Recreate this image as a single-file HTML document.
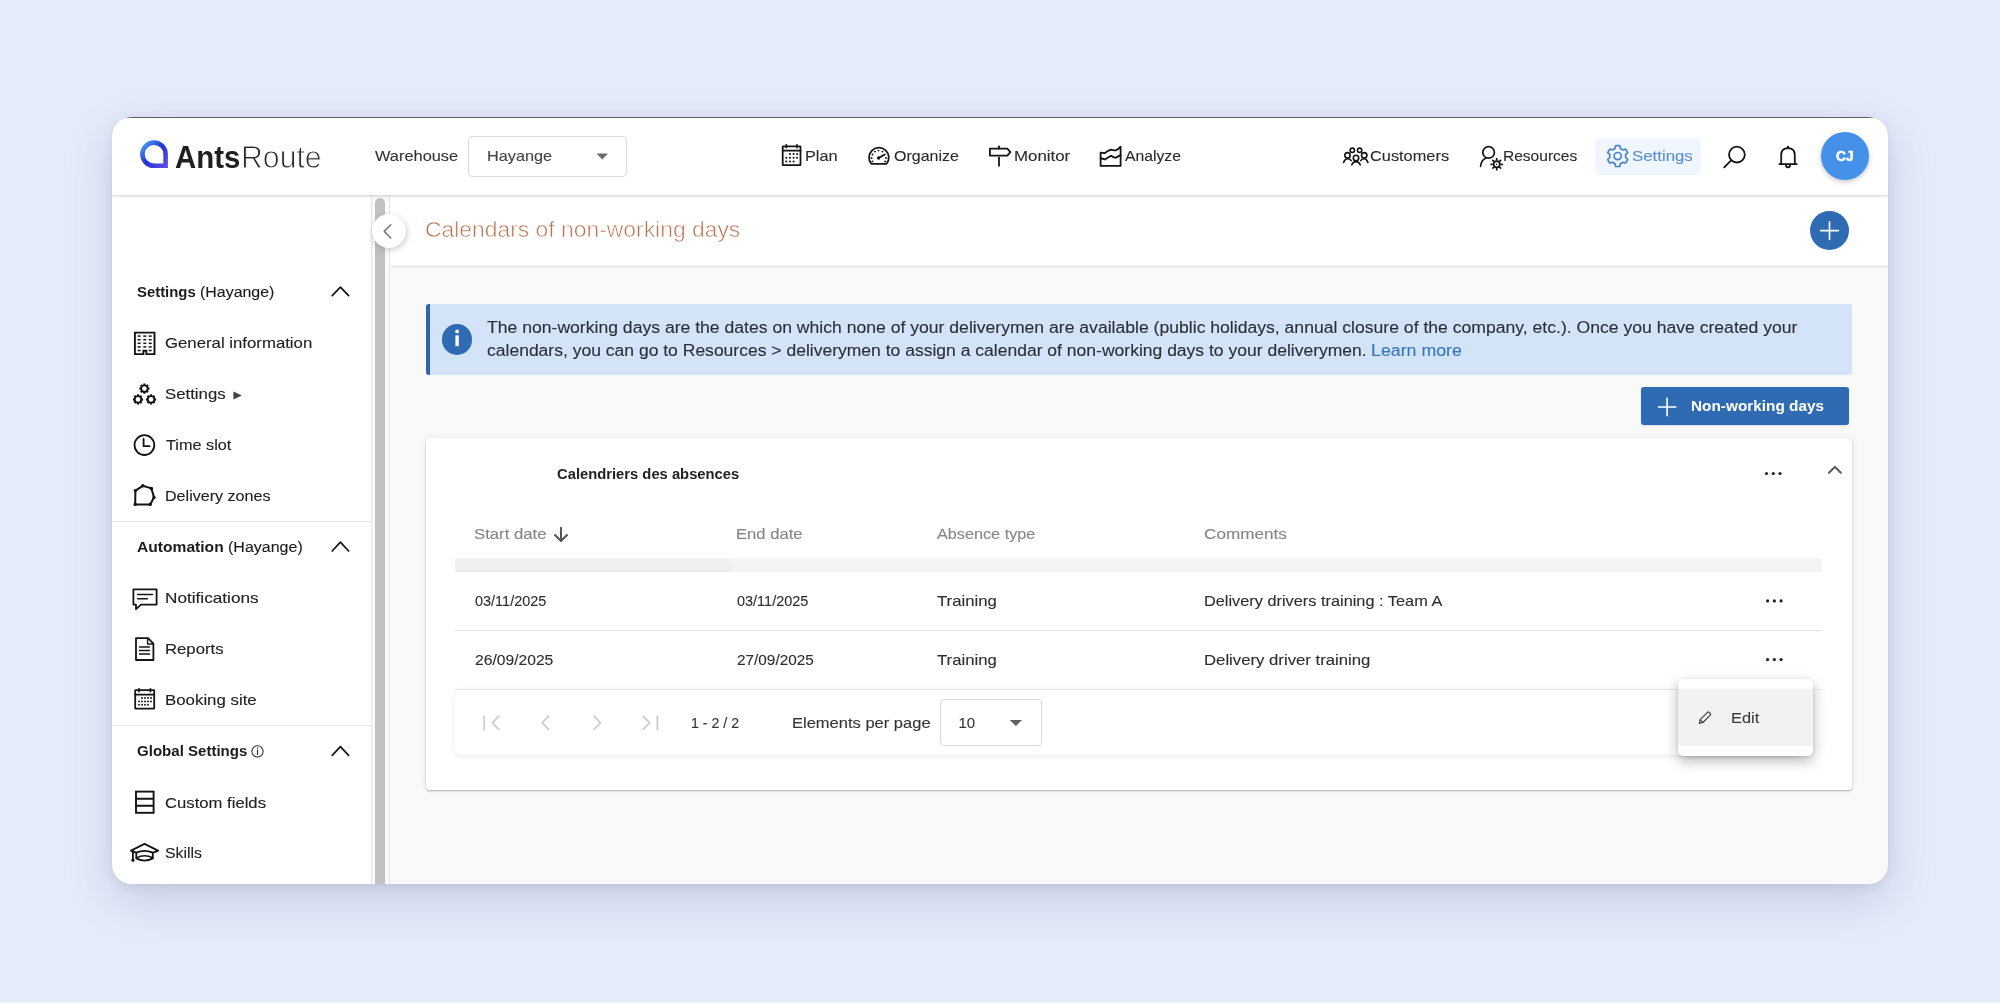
<!DOCTYPE html>
<html><head><meta charset="utf-8"><title>AntsRoute - Calendars of non-working days</title>
<style>
*{margin:0;padding:0;box-sizing:border-box}
html,body{width:2000px;height:1003px;overflow:hidden;background:#e6ebfb;font-family:"Liberation Sans",sans-serif}
.abs{position:absolute}
.t{position:absolute;line-height:0;white-space:pre;transform-origin:0 0}
.win{position:absolute;left:112px;top:117px;width:1776px;height:767px;border-radius:20px;overflow:hidden;background:#fff;
 box-shadow:0 16px 45px rgba(70,80,120,.2),0 2px 10px rgba(70,80,120,.1)}
.pg{position:absolute;left:-112px;top:-117px;width:2000px;height:1003px}
svg{position:absolute;overflow:visible}
.tl{position:absolute;left:0;top:0;width:2000px;height:1003px;will-change:transform}
</style></head>
<body>
<div class="win"><div class="pg">
<!-- top dark edge -->
<div class="abs" style="left:112px;top:117px;width:1776px;height:1px;background:#5d616b"></div>
<!-- main area bg -->
<div class="abs" style="left:390px;top:195px;width:1498px;height:689px;background:#f9f9f9"></div>
<!-- title bar -->
<div class="abs" style="left:390px;top:195px;width:1498px;height:72px;background:#fff;border-bottom:1px solid #e2e2e2"></div>
<!-- sidebar borders / scrollbar -->
<div class="abs" style="left:371px;top:195px;width:1px;height:689px;background:#e4e4e4"></div>
<div class="abs" style="left:372px;top:195px;width:17px;height:689px;background:#fafafa"></div>
<div class="abs" style="left:389px;top:195px;width:1px;height:689px;background:#e6e6e6"></div>
<div class="abs" style="left:375px;top:198px;width:10px;height:700px;background:#c1c1c1;border-radius:5px"></div>
<div class="abs" style="left:112px;top:521px;width:259px;height:1px;background:#e3e3e3"></div>
<div class="abs" style="left:112px;top:725px;width:259px;height:1px;background:#e3e3e3"></div>
<!-- header -->
<div class="abs" style="left:112px;top:118px;width:1776px;height:77px;background:#fff;box-shadow:0 1px 3px rgba(0,0,0,.2)"></div>
<div class="abs" style="left:468px;top:136px;width:158.5px;height:40.5px;border:1px solid #dcdcdc;border-radius:4px;background:#fff"></div>
<div class="abs" style="left:1595px;top:137.5px;width:105.6px;height:37.5px;background:#f0f6fd;border-radius:5px"></div>
<div class="abs" style="left:1821px;top:131.6px;width:48px;height:48px;border-radius:50%;background:#4590e9;box-shadow:0 2px 5px rgba(0,0,0,.22)"></div>
<!-- collapse button -->
<div class="abs" style="left:372px;top:214px;width:34px;height:34px;border-radius:50%;background:#fff;box-shadow:1px 2px 6px rgba(0,0,0,.2)"></div>
<!-- plus circle -->
<div class="abs" style="left:1810px;top:211px;width:39px;height:39px;border-radius:50%;background:#2f6bb2"></div>
<!-- banner -->
<div class="abs" style="left:426px;top:304px;width:1425.5px;height:70.5px;background:#d3e4f8;border-left:4px solid #2e66ad;border-radius:3px"></div>
<div class="abs" style="left:441.8px;top:324.2px;width:30.4px;height:30.4px;border-radius:50%;background:#2f6bb2"></div>
<!-- button -->
<div class="abs" style="left:1641px;top:387px;width:208px;height:38px;background:#2f6bb2;border-radius:3px;box-shadow:0 1px 2px rgba(0,0,0,.12)"></div>
<!-- card -->
<div class="abs" style="left:426px;top:437.5px;width:1426px;height:352.5px;background:#fff;border-radius:4px;box-shadow:0 1px 2px rgba(0,0,0,.28),0 0 8px rgba(0,0,0,.06)"></div>
<div class="abs" style="left:455px;top:558px;width:1367px;height:14px;background:linear-gradient(#f6f6f8,#f2f2f4)"></div>
<div class="abs" style="left:455px;top:558px;width:277px;height:14px;background:linear-gradient(#f3f3f5,#eeeef0)"></div>
<div class="abs" style="left:455px;top:630px;width:1367px;height:1px;background:#e3e3e3"></div>
<div class="abs" style="left:455px;top:689px;width:1367px;height:1px;background:#ececec"></div>
<div class="abs" style="left:455px;top:690px;width:1345px;height:64.5px;background:#fff;border-radius:4px;box-shadow:0 1px 6px rgba(0,0,0,.09)"></div>
<div class="abs" style="left:940.3px;top:699.4px;width:101.5px;height:46.8px;border:1px solid #d9d9d9;border-radius:4px;background:#fff"></div>
<!-- edit dropdown -->
<div class="abs" style="left:1678.2px;top:679px;width:134.6px;height:77.4px;background:#fff;border-radius:5px;box-shadow:0 5px 14px rgba(0,0,0,.28),0 1px 3px rgba(0,0,0,.12)"></div>
<div class="abs" style="left:1678.2px;top:689.3px;width:134.6px;height:56.7px;background:#f2f2f2"></div>


<svg style="left:0;top:0" width="2000" height="1003" viewBox="0 0 2000 1003" fill="none" stroke-linecap="round" stroke-linejoin="round">
<defs>
<linearGradient id="lg" x1="0" y1="0" x2="1" y2="1">
<stop offset="0" stop-color="#4fa3f2"/><stop offset=".5" stop-color="#2235d0"/><stop offset="1" stop-color="#5d4ae8"/>
</linearGradient>
</defs>
<path d="M165.6,165.8 L154.2,165.8 A11.6,11.6 0 1 1 165.6,154.2 Z" stroke="url(#lg)" stroke-width="4.6" stroke-linejoin="miter" stroke-linecap="butt"/>
<path d="M596.5,153.5 L608,153.5 L602.25,159.5 Z" fill="#6a6a6a" stroke="none"/>
<g stroke="#141414" stroke-width="1.8">
<rect x="782.7" y="146.4" width="17.8" height="18.8" rx="0.4"/>
<line x1="782.7" y1="150.6" x2="800.5" y2="150.6"/>
<line x1="786.3" y1="144.9" x2="786.3" y2="147.6"/><line x1="797" y1="144.9" x2="797" y2="147.6"/>
</g>
<g fill="#141414"><circle cx="790" cy="154" r="1.05"/><circle cx="793.6" cy="154" r="1.05"/><circle cx="797.1" cy="154" r="1.05"/><circle cx="786.3" cy="157.8" r="1.05"/><circle cx="790" cy="157.8" r="1.05"/><circle cx="793.6" cy="157.8" r="1.05"/><circle cx="797.1" cy="157.8" r="1.05"/><circle cx="786.3" cy="161.5" r="1.05"/><circle cx="790" cy="161.5" r="1.05"/><circle cx="793.6" cy="161.5" r="1.05"/></g>
<g stroke="#141414" stroke-width="1.8">
<path d="M871.2,163.8 A9.9,9.9 0 1 1 886.6,163.8 Z"/>
<line x1="878.6" y1="158" x2="884.8" y2="154.4" stroke-width="1.7"/>
</g>
<g fill="#141414"><circle cx="875" cy="151.6" r="0.95"/><circle cx="878.4" cy="150.6" r="0.95"/><circle cx="882.5" cy="151.6" r="0.95"/><circle cx="872.5" cy="154.5" r="0.95"/><circle cx="871.6" cy="158" r="0.95"/><circle cx="872.5" cy="161.4" r="0.95"/><circle cx="886" cy="158" r="0.95"/><circle cx="885" cy="161.4" r="0.95"/><circle cx="878.6" cy="158" r="1.7"/></g>
<g stroke="#141414" stroke-width="1.8">
<path d="M989.9,148.6 L1007.3,148.6 L1010.4,152.1 L1007.3,155.6 L989.9,155.6 Z"/>
<line x1="999" y1="146.3" x2="999" y2="148.6"/><line x1="999" y1="157.6" x2="999" y2="165.8"/>
</g>
<g stroke="#141414" stroke-width="1.8">
<path d="M1100.6,152.6 L1100.6,165.9 L1120.6,165.9 L1120.6,146.7 Q1118,149.8 1115.8,150.4 Q1113,150.6 1110.8,149.7 Q1106.8,151.2 1104.9,153.2 Q1102.8,152.6 1100.6,152.6 Z"/>
<path d="M1100.6,158.5 Q1102.8,158.4 1104.9,159.5 Q1108,157.6 1111.1,155.8 Q1113.5,157.6 1115.8,157.8 Q1118,156.4 1120.6,155.1"/>
</g>
<g stroke="#141414" stroke-width="1.6">
<circle cx="1352.3" cy="150.3" r="2.2"/><circle cx="1359.6" cy="150.3" r="2.2"/>
<circle cx="1347.5" cy="155.3" r="2.7"/><circle cx="1364.2" cy="155.3" r="2.7"/><circle cx="1356" cy="158" r="2.7"/>
<path d="M1343.6,162.4 Q1345,158.8 1347.5,158.8 Q1350,158.8 1351.2,160.6"/>
<path d="M1367.9,162.4 Q1366.5,158.8 1364.2,158.8 Q1361.8,158.8 1360.8,160.6"/>
<path d="M1351.8,164.8 Q1353,161.6 1356,161.6 Q1359,161.6 1360.2,164.8"/>
</g>
<g stroke="#141414" stroke-width="1.7">
<circle cx="1488.6" cy="152.4" r="5.8"/>
<path d="M1480.6,166.4 Q1481.3,159.6 1485.8,158.2"/>
</g>
<circle cx="1496.7" cy="164.3" r="3.1" stroke="#141414" stroke-width="1.7"/><circle cx="1496.7" cy="164.3" r="0.8" fill="#141414"/>
<g stroke="#141414" stroke-width="1.7" stroke-linecap="butt"><line x1="1496.70" y1="160.50" x2="1496.70" y2="158.10"/><line x1="1499.39" y1="161.61" x2="1501.08" y2="159.92"/><line x1="1500.50" y1="164.30" x2="1502.90" y2="164.30"/><line x1="1499.39" y1="166.99" x2="1501.08" y2="168.68"/><line x1="1496.70" y1="168.10" x2="1496.70" y2="170.50"/><line x1="1494.01" y1="166.99" x2="1492.32" y2="168.68"/><line x1="1492.90" y1="164.30" x2="1490.50" y2="164.30"/><line x1="1494.01" y1="161.61" x2="1492.32" y2="159.92"/></g>
<path d="M1614.96,148.58 L1615.68,145.69 L1619.72,145.69 L1620.44,148.58 A8.0,8.0 0 0 1 1622.84,149.97 L1625.70,149.15 L1627.72,152.65 L1625.58,154.71 A8.0,8.0 0 0 1 1625.58,157.49 L1627.72,159.55 L1625.70,163.05 L1622.84,162.23 A8.0,8.0 0 0 1 1620.44,163.62 L1619.72,166.51 L1615.68,166.51 L1614.96,163.62 A8.0,8.0 0 0 1 1612.56,162.23 L1609.70,163.05 L1607.68,159.55 L1609.82,157.49 A8.0,8.0 0 0 1 1609.82,154.71 L1607.68,152.65 L1609.70,149.15 L1612.56,149.97 A8.0,8.0 0 0 1 1614.96,148.58 Z" stroke="#4d84c6" stroke-width="1.7"/>
<circle cx="1617.7" cy="156.1" r="3.6" stroke="#4d84c6" stroke-width="1.7"/>
<g stroke="#141414" stroke-width="1.8">
<circle cx="1736.9" cy="154.6" r="7.9"/>
<line x1="1731.2" y1="160.3" x2="1724.2" y2="167.4"/>
<path d="M1781.2,164.2 L1781.2,155.2 Q1781.2,148.2 1788,148.2 Q1794.8,148.2 1794.8,155.2 L1794.8,164.2"/>
<line x1="1779.4" y1="164.2" x2="1796.7" y2="164.2"/>
<path d="M1786,165.3 A2,2 0 0 0 1790,165.3"/>
</g>
<circle cx="1788" cy="147" r="1.2" fill="#141414"/>
<path d="M390.8,224.8 L384.2,231.4 L390.8,238" stroke="#777" stroke-width="1.5"/>
<g stroke="#fff" stroke-width="1.6">
<line x1="1820.6" y1="230.6" x2="1838.4" y2="230.6"/><line x1="1829.5" y1="221.7" x2="1829.5" y2="239.5"/>
<line x1="1658.4" y1="407" x2="1675.8" y2="407"/><line x1="1667.1" y1="398.3" x2="1667.1" y2="415.7"/>
</g>
<rect x="455.4" y="335.4" width="3.4" height="10.8" fill="#fff" stroke="none"/><circle cx="457.1" cy="331.4" r="1.9" fill="#fff" stroke="none"/>
<g stroke="#141414" stroke-width="1.7">
<path d="M332.2,295.6 L340.4,287.2 L348.6,295.6"/>
<path d="M332.2,551 L340.4,542.2 L348.6,551"/>
<path d="M332.2,755.4 L340.4,746.6 L348.6,755.4"/>
</g>
<path d="M233.4,391.4 L233.4,399.6 L241.8,395.5 Z" fill="#444" stroke="none"/>
<g stroke="#141414" stroke-width="1.9" stroke-linecap="butt" stroke-linejoin="miter">
<path d="M143.4,354.1 L134.9,354.1 L134.9,332.6 L154.5,332.6 L154.5,354.1 L146.4,354.1 L146.4,350.8 L143.4,350.8 Z"/>
</g>
<g fill="#141414"><rect x="137.6" y="335.35" width="3" height="1.5"/><rect x="143.3" y="335.35" width="3" height="1.5"/><rect x="148.7" y="335.35" width="3" height="1.5"/><rect x="137.6" y="338.95" width="3" height="1.5"/><rect x="143.3" y="338.95" width="3" height="1.5"/><rect x="148.7" y="338.95" width="3" height="1.5"/><rect x="137.6" y="342.55" width="3" height="1.5"/><rect x="143.3" y="342.55" width="3" height="1.5"/><rect x="148.7" y="342.55" width="3" height="1.5"/><rect x="137.6" y="346.15" width="3" height="1.5"/><rect x="143.3" y="346.15" width="3" height="1.5"/><rect x="148.7" y="346.15" width="3" height="1.5"/><rect x="137.6" y="349.75" width="3" height="1.5"/><rect x="148.7" y="349.75" width="3" height="1.5"/></g>
<path d="M143.13,384.70 L143.41,383.50 L145.39,383.50 L145.67,384.70 A4.1,4.1 0 0 1 146.26,384.95 L147.31,384.29 L148.71,385.69 L148.05,386.74 A4.1,4.1 0 0 1 148.30,387.33 L149.50,387.61 L149.50,389.59 L148.30,389.87 A4.1,4.1 0 0 1 148.05,390.46 L148.71,391.51 L147.31,392.91 L146.26,392.25 A4.1,4.1 0 0 1 145.67,392.50 L145.39,393.70 L143.41,393.70 L143.13,392.50 A4.1,4.1 0 0 1 142.54,392.25 L141.49,392.91 L140.09,391.51 L140.75,390.46 A4.1,4.1 0 0 1 140.50,389.87 L139.30,389.59 L139.30,387.61 L140.50,387.33 A4.1,4.1 0 0 1 140.75,386.74 L140.09,385.69 L141.49,384.29 L142.54,384.95 A4.1,4.1 0 0 1 143.13,384.70 Z" fill="#141414" stroke="none"/>
<circle cx="144.4" cy="388.6" r="2.3" fill="#fff" stroke="none"/>
<path d="M136.73,395.50 L137.01,394.30 L138.99,394.30 L139.27,395.50 A4.1,4.1 0 0 1 139.86,395.75 L140.91,395.09 L142.31,396.49 L141.65,397.54 A4.1,4.1 0 0 1 141.90,398.13 L143.10,398.41 L143.10,400.39 L141.90,400.67 A4.1,4.1 0 0 1 141.65,401.26 L142.31,402.31 L140.91,403.71 L139.86,403.05 A4.1,4.1 0 0 1 139.27,403.30 L138.99,404.50 L137.01,404.50 L136.73,403.30 A4.1,4.1 0 0 1 136.14,403.05 L135.09,403.71 L133.69,402.31 L134.35,401.26 A4.1,4.1 0 0 1 134.10,400.67 L132.90,400.39 L132.90,398.41 L134.10,398.13 A4.1,4.1 0 0 1 134.35,397.54 L133.69,396.49 L135.09,395.09 L136.14,395.75 A4.1,4.1 0 0 1 136.73,395.50 Z" fill="#141414" stroke="none"/>
<circle cx="138" cy="399.4" r="2.3" fill="#fff" stroke="none"/>
<path d="M149.73,395.50 L150.01,394.30 L151.99,394.30 L152.27,395.50 A4.1,4.1 0 0 1 152.86,395.75 L153.91,395.09 L155.31,396.49 L154.65,397.54 A4.1,4.1 0 0 1 154.90,398.13 L156.10,398.41 L156.10,400.39 L154.90,400.67 A4.1,4.1 0 0 1 154.65,401.26 L155.31,402.31 L153.91,403.71 L152.86,403.05 A4.1,4.1 0 0 1 152.27,403.30 L151.99,404.50 L150.01,404.50 L149.73,403.30 A4.1,4.1 0 0 1 149.14,403.05 L148.09,403.71 L146.69,402.31 L147.35,401.26 A4.1,4.1 0 0 1 147.10,400.67 L145.90,400.39 L145.90,398.41 L147.10,398.13 A4.1,4.1 0 0 1 147.35,397.54 L146.69,396.49 L148.09,395.09 L149.14,395.75 A4.1,4.1 0 0 1 149.73,395.50 Z" fill="#141414" stroke="none"/>
<circle cx="151" cy="399.4" r="2.3" fill="#fff" stroke="none"/>
<g stroke="#141414" stroke-width="1.8">
<circle cx="144.4" cy="445.1" r="9.9"/>
<path d="M143.6,439 L143.6,446.2 L149.6,446.2"/>
<path d="M135.2,504.4 L135.4,490.6 L142.8,485.8 L151.4,488.4 L154,497.4 L150.2,504.4 Z" stroke-width="2"/>
</g>
<g fill="#141414"><circle cx="135.2" cy="504.4" r="1.7"/><circle cx="135.4" cy="490.6" r="1.7"/><circle cx="142.8" cy="485.8" r="1.7"/><circle cx="151.4" cy="488.4" r="1.7"/><circle cx="154" cy="497.4" r="1.7"/><circle cx="150.2" cy="504.4" r="1.7"/></g>
<g stroke="#141414" stroke-width="1.8">
<path d="M133.4,589.4 L156.6,589.4 L156.6,604.6 L141,604.6 L136,609.2 L136,604.6 L133.4,604.6 Z"/>
<line x1="137.6" y1="594.6" x2="152.4" y2="594.6" stroke-width="1.5"/>
<line x1="137.6" y1="598.8" x2="147.4" y2="598.8" stroke-width="1.5"/>
<path d="M136,638.2 L148,638.2 L153.4,643.6 L153.4,660 L136,660 Z"/>
<path d="M147.6,638.2 L147.6,644 L153.4,644" stroke-width="1.4"/>
</g>
<g stroke="#141414" stroke-width="1.4">
<line x1="139.5" y1="647" x2="149.5" y2="647"/><line x1="139.5" y1="650.5" x2="149.5" y2="650.5"/><line x1="139.5" y1="654" x2="149.5" y2="654"/>
</g>
<g stroke="#141414" stroke-width="1.8">
<rect x="135.2" y="690.2" width="19" height="18.4" rx="0.4"/>
<line x1="135.2" y1="694.6" x2="154.2" y2="694.6"/>
<line x1="139" y1="688.8" x2="139" y2="691.6"/><line x1="150.4" y1="688.8" x2="150.4" y2="691.6"/>
</g>
<g fill="#141414"><circle cx="142" cy="698" r="0.95"/><circle cx="145" cy="698" r="0.95"/><circle cx="148" cy="698" r="0.95"/><circle cx="151" cy="698" r="0.95"/><circle cx="139" cy="701.4" r="0.95"/><circle cx="142" cy="701.4" r="0.95"/><circle cx="145" cy="701.4" r="0.95"/><circle cx="148" cy="701.4" r="0.95"/><circle cx="151" cy="701.4" r="0.95"/><circle cx="139" cy="704.8" r="0.95"/><circle cx="142" cy="704.8" r="0.95"/><circle cx="145" cy="704.8" r="0.95"/><circle cx="148" cy="704.8" r="0.95"/></g>
<circle cx="257.5" cy="751.4" r="5.6" stroke="#333" stroke-width="1.1"/><line x1="257.5" y1="750.2" x2="257.5" y2="754.4" stroke="#333" stroke-width="1.2"/><circle cx="257.5" cy="748.3" r="0.7" fill="#333"/>
<g stroke="#141414" stroke-width="1.9" stroke-linejoin="miter" stroke-linecap="butt">
<rect x="136" y="791.6" width="17.6" height="21.2"/>
<line x1="136" y1="798.8" x2="153.6" y2="798.8"/><line x1="136" y1="805.8" x2="153.6" y2="805.8"/>
</g>
<g stroke="#141414" stroke-width="1.8">
<path d="M131,850.6 L144.5,843.9 L158.1,850.6 Q155,852.2 152.8,852.6 Q144.5,849 136.3,852.6 Q133.5,851.8 131,850.6 Z"/>
<path d="M136.3,852.6 L136.3,858.4 Q144.5,862.8 152.8,858.4 L152.8,852.6"/>
<path d="M136.3,857.8 Q144.5,853.8 152.8,857.8" stroke-width="1.5"/>
<line x1="132.9" y1="851" x2="132.9" y2="859.6"/>
</g>
<circle cx="132.9" cy="860.2" r="1.6" fill="#141414"/>
<g stroke="#555" stroke-width="2"><line x1="561" y1="527.8" x2="561" y2="540.8"/><path d="M555,535 L561,541 L567,535"/></g>
<g fill="#222"><circle cx="1766.5" cy="473.5" r="1.6"/><circle cx="1773.25" cy="473.5" r="1.6"/><circle cx="1780" cy="473.5" r="1.6"/><circle cx="1767.6" cy="600.9" r="1.6"/><circle cx="1774.35" cy="600.9" r="1.6"/><circle cx="1781.1" cy="600.9" r="1.6"/><circle cx="1767.6" cy="659.6" r="1.6"/><circle cx="1774.35" cy="659.6" r="1.6"/><circle cx="1781.1" cy="659.6" r="1.6"/></g>
<path d="M1829,472.8 L1834.9,466.9 L1840.8,472.8" stroke="#555" stroke-width="2"/>
<g stroke="#cdcdcd" stroke-width="1.8">
<line x1="484.2" y1="716.2" x2="484.2" y2="729.4"/><path d="M498.8,716.2 L492.4,722.8 L498.8,729.4"/>
<path d="M548.6,716.2 L542.2,722.8 L548.6,729.4"/>
<path d="M594,716.2 L600.4,722.8 L594,729.4"/>
<path d="M643.2,716.2 L649.6,722.8 L643.2,729.4"/><line x1="657.4" y1="716.2" x2="657.4" y2="729.4"/>
</g>
<path d="M1009.8,720 L1022,720 L1015.9,726 Z" fill="#606060" stroke="none"/>
<path d="M1699.3,723.4 L1700.1,719.7 L1707.5,712.3 Q1708.3,711.5 1709.1,712.3 L1710.3,713.5 Q1711.1,714.3 1710.3,715.1 L1702.9,722.5 Z M1700.3,719.9 L1703,722.4" stroke="#3a3a3a" stroke-width="1.1"/>
</svg>
<div class="tl">
<div class="t" style="left:174.55px;top:157.75px;font-size:31px;font-weight:700;color:#1f1f24;transform:scaleX(0.9478)">Ants</div>
<div class="t" style="left:241.05px;top:157.75px;font-size:31px;font-weight:400;color:#2a2a2e;transform:scaleX(0.9750);-webkit-text-stroke:0.9px #fff">Route</div>
<div class="t" style="left:374.50px;top:156.10px;font-size:15px;font-weight:400;color:#333;transform:scaleX(1.0921);-webkit-text-stroke:0.12px #333">Warehouse</div>
<div class="t" style="left:486.52px;top:156.10px;font-size:15px;font-weight:400;color:#444;transform:scaleX(1.0847);-webkit-text-stroke:0.12px #444">Hayange</div>
<div class="t" style="left:805.41px;top:155.60px;font-size:15px;font-weight:400;color:#2b2b2b;transform:scaleX(1.0862);-webkit-text-stroke:0.12px #2b2b2b">Plan</div>
<div class="t" style="left:893.50px;top:155.60px;font-size:15px;font-weight:400;color:#2b2b2b;transform:scaleX(1.0656);-webkit-text-stroke:0.12px #2b2b2b">Organize</div>
<div class="t" style="left:1013.78px;top:155.60px;font-size:15px;font-weight:400;color:#2b2b2b;transform:scaleX(1.1224);-webkit-text-stroke:0.12px #2b2b2b">Monitor</div>
<div class="t" style="left:1125.40px;top:155.60px;font-size:15px;font-weight:400;color:#2b2b2b;transform:scaleX(1.0491);-webkit-text-stroke:0.12px #2b2b2b">Analyze</div>
<div class="t" style="left:1369.91px;top:156.00px;font-size:15px;font-weight:400;color:#2b2b2b;transform:scaleX(1.0901);-webkit-text-stroke:0.12px #2b2b2b">Customers</div>
<div class="t" style="left:1502.96px;top:156.00px;font-size:15px;font-weight:400;color:#2b2b2b;transform:scaleX(1.0352);-webkit-text-stroke:0.12px #2b2b2b">Resources</div>
<div class="t" style="left:1631.78px;top:155.60px;font-size:15px;font-weight:400;color:#5a8fd3;transform:scaleX(1.1208);-webkit-text-stroke:0.12px #5a8fd3">Settings</div>
<div class="t" style="left:1835.80px;top:156.15px;font-size:14px;font-weight:700;color:#fff;transform:scaleX(0.9824);-webkit-text-stroke:0.5px #fff">CJ</div>
<div class="t" style="left:425.38px;top:229.73px;font-size:22.4px;font-weight:400;color:#bb7352;transform:scaleX(1.0215);-webkit-text-stroke:0.55px #fff">Calendars of non-working days</div>
<div class="t" style="left:136.80px;top:292.23px;font-size:15.2px;font-weight:700;color:#1c1c1c;transform:scaleX(0.9800)">Settings</div>
<div class="t" style="left:199.95px;top:292.23px;font-size:15.2px;font-weight:400;color:#1c1c1c;transform:scaleX(1.0493);-webkit-text-stroke:0.12px #1c1c1c">(Hayange)</div>
<div class="t" style="left:165.08px;top:342.80px;font-size:15px;font-weight:400;color:#222;transform:scaleX(1.1177);-webkit-text-stroke:0.12px #222">General information</div>
<div class="t" style="left:165.08px;top:393.80px;font-size:15px;font-weight:400;color:#222;transform:scaleX(1.1189);-webkit-text-stroke:0.12px #222">Settings</div>
<div class="t" style="left:166.20px;top:444.80px;font-size:15px;font-weight:400;color:#222;transform:scaleX(1.0833);-webkit-text-stroke:0.12px #222">Time slot</div>
<div class="t" style="left:165.13px;top:495.60px;font-size:15px;font-weight:400;color:#222;transform:scaleX(1.0722);-webkit-text-stroke:0.12px #222">Delivery zones</div>
<div class="t" style="left:136.70px;top:546.93px;font-size:15.2px;font-weight:700;color:#1c1c1c;transform:scaleX(1.0274)">Automation</div>
<div class="t" style="left:227.75px;top:546.93px;font-size:15.2px;font-weight:400;color:#1c1c1c;transform:scaleX(1.0536);-webkit-text-stroke:0.12px #1c1c1c">(Hayange)</div>
<div class="t" style="left:165.05px;top:598.10px;font-size:15px;font-weight:400;color:#222;transform:scaleX(1.1457);-webkit-text-stroke:0.12px #222">Notifications</div>
<div class="t" style="left:165.09px;top:649.30px;font-size:15px;font-weight:400;color:#222;transform:scaleX(1.1137);-webkit-text-stroke:0.12px #222">Reports</div>
<div class="t" style="left:165.08px;top:699.60px;font-size:15px;font-weight:400;color:#222;transform:scaleX(1.1225);-webkit-text-stroke:0.12px #222">Booking site</div>
<div class="t" style="left:136.70px;top:751.43px;font-size:15.2px;font-weight:700;color:#1c1c1c;transform:scaleX(0.9910)">Global Settings</div>
<div class="t" style="left:165.09px;top:802.70px;font-size:15px;font-weight:400;color:#222;transform:scaleX(1.1111);-webkit-text-stroke:0.12px #222">Custom fields</div>
<div class="t" style="left:165.14px;top:853.10px;font-size:15px;font-weight:400;color:#222;transform:scaleX(1.0588);-webkit-text-stroke:0.12px #222">Skills</div>
<div class="t" style="left:487.00px;top:328.45px;font-size:16px;font-weight:400;color:#2c2f36;transform:scaleX(1.0990);-webkit-text-stroke:0.12px #2c2f36">The non-working days are the dates on which none of your deliverymen are available (public holidays, annual closure of the company, etc.). Once you have created your</div>
<div class="t" style="left:487.00px;top:351.05px;font-size:16px;font-weight:400;color:#2c2f36;transform:scaleX(1.0948);-webkit-text-stroke:0.12px #2c2f36">calendars, you can go to Resources &gt; deliverymen to assign a calendar of non-working days to your deliverymen.</div>
<div class="t" style="left:1370.89px;top:351.05px;font-size:16px;font-weight:400;color:#3a74ba;transform:scaleX(1.1111);-webkit-text-stroke:0.12px #3a74ba">Learn more</div>
<div class="t" style="left:1690.65px;top:405.74px;font-size:14.6px;font-weight:700;color:#fff;transform:scaleX(1.0520)">Non-working days</div>
<div class="t" style="left:556.50px;top:473.86px;font-size:15.4px;font-weight:700;color:#222;transform:scaleX(0.9595)">Calendriers des absences</div>
<div class="t" style="left:473.58px;top:533.80px;font-size:15px;font-weight:400;color:#858585;transform:scaleX(1.1156);-webkit-text-stroke:0.12px #858585">Start date</div>
<div class="t" style="left:736.19px;top:533.80px;font-size:15px;font-weight:400;color:#858585;transform:scaleX(1.1085);-webkit-text-stroke:0.12px #858585">End date</div>
<div class="t" style="left:936.60px;top:533.80px;font-size:15px;font-weight:400;color:#858585;transform:scaleX(1.0813);-webkit-text-stroke:0.12px #858585">Absence type</div>
<div class="t" style="left:1204.16px;top:533.80px;font-size:15px;font-weight:400;color:#858585;transform:scaleX(1.1437);-webkit-text-stroke:0.12px #858585">Comments</div>
<div class="t" style="left:474.70px;top:600.50px;font-size:15px;font-weight:400;color:#2e2e2e;transform:scaleX(0.9649);-webkit-text-stroke:0.12px #2e2e2e">03/11/2025</div>
<div class="t" style="left:737.30px;top:600.50px;font-size:15px;font-weight:400;color:#2e2e2e;transform:scaleX(0.9649);-webkit-text-stroke:0.12px #2e2e2e">03/11/2025</div>
<div class="t" style="left:936.60px;top:600.50px;font-size:15px;font-weight:400;color:#2e2e2e;transform:scaleX(1.1132);-webkit-text-stroke:0.12px #2e2e2e">Training</div>
<div class="t" style="left:1204.21px;top:600.50px;font-size:15px;font-weight:400;color:#2e2e2e;transform:scaleX(1.0881);-webkit-text-stroke:0.12px #2e2e2e">Delivery drivers training : Team A</div>
<div class="t" style="left:474.70px;top:659.80px;font-size:15px;font-weight:400;color:#2e2e2e;transform:scaleX(1.0427);-webkit-text-stroke:0.12px #2e2e2e">26/09/2025</div>
<div class="t" style="left:737.30px;top:659.80px;font-size:15px;font-weight:400;color:#2e2e2e;transform:scaleX(1.0227);-webkit-text-stroke:0.12px #2e2e2e">27/09/2025</div>
<div class="t" style="left:936.60px;top:659.80px;font-size:15px;font-weight:400;color:#2e2e2e;transform:scaleX(1.1132);-webkit-text-stroke:0.12px #2e2e2e">Training</div>
<div class="t" style="left:1204.19px;top:659.80px;font-size:15px;font-weight:400;color:#2e2e2e;transform:scaleX(1.1149);-webkit-text-stroke:0.12px #2e2e2e">Delivery driver training</div>
<div class="t" style="left:691.06px;top:722.80px;font-size:15px;font-weight:400;color:#333;transform:scaleX(0.9440);-webkit-text-stroke:0.12px #333">1 - 2 / 2</div>
<div class="t" style="left:791.60px;top:722.80px;font-size:15px;font-weight:400;color:#333;transform:scaleX(1.1008);-webkit-text-stroke:0.12px #333">Elements per page</div>
<div class="t" style="left:958.50px;top:722.80px;font-size:15px;font-weight:400;color:#333;transform:scaleX(1.0000);-webkit-text-stroke:0.12px #333">10</div>
<div class="t" style="left:1730.63px;top:717.86px;font-size:15.4px;font-weight:400;color:#3d3d3d;transform:scaleX(1.0654);-webkit-text-stroke:0.12px #3d3d3d">Edit</div>
</div>
</div></div>
<div class="abs" style="left:0;top:1002px;width:2000px;height:1px;background:rgba(255,255,255,.7)"></div>
</body></html>
